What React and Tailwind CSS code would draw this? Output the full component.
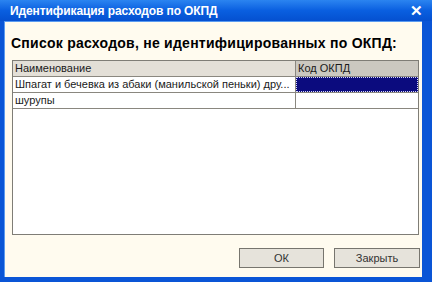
export default function App() {
  const font = { fontFamily: '"Liberation Sans", Arial, sans-serif' };
  return (
    <div
      className="w-[432px] h-[282px] flex flex-col bg-[#0a55d6] overflow-hidden"
      style={font}
    >
      {/* title bar */}
      <div className="h-[21px] flex items-center justify-between pl-[10px] pr-[9px] bg-gradient-to-b from-[#2b84f0] via-[#0a5fe0] to-[#0550d0]">
        <span className="text-white font-bold text-[12px] leading-none tracking-[-0.1px]">
          Идентификация расходов по ОКПД
        </span>
        <span className="text-white font-bold text-[15px] leading-none">✕</span>
      </div>

      {/* frame */}
      <div className="flex-1 flex pl-[4px] pr-[10px] pb-[5px]">
        <div className="flex-1 flex flex-col bg-[#fffbef] border-l border-t border-[#5b9bf0]">
          <div className="pl-[6px] pt-[13px] h-[38px] text-black font-bold text-[14px] leading-[16px] tracking-[0.25px]">
            Список расходов, не идентифицированных по ОКПД:
          </div>

          {/* table */}
          <div className="ml-[7px] w-[407px] h-[175px] border border-[#7f7d76] bg-white text-[11px] text-[#1a1a1a]">
            <div className="grid grid-cols-[283px_1fr] h-[16px] border-b border-[#8a877f]">
              <div className="bg-[#e3dfd7] border-r border-[#8a877f] pl-[2px] leading-[15px]">
                Наименование
              </div>
              <div className="bg-[#cbc8c0] pl-[2px] leading-[15px]">Код ОКПД</div>
            </div>
            <div className="grid grid-cols-[283px_1fr] h-[16px] border-b border-[#8a877f]">
              <div className="border-r border-[#8a877f] pl-[2px] leading-[15px] whitespace-nowrap overflow-hidden">
                Шпагат и бечевка из абаки (манильской пеньки) дру...
              </div>
              <div className="bg-[#0b0b7e] border border-dotted border-[#d8d8ff]" />
            </div>
            <div className="grid grid-cols-[283px_1fr] h-[16px] border-b border-[#8a877f]">
              <div className="border-r border-[#8a877f] pl-[2px] leading-[15px]">шурупы</div>
              <div />
            </div>
          </div>

          {/* buttons */}
          <div className="flex justify-end gap-[10px] mt-[13px] pr-[2px]">
            <button className="w-[85px] h-[20px] bg-[#e6e3db] border border-[#77756e] text-[11px] text-[#333] leading-none">
              ОК
            </button>
            <button className="w-[86px] h-[20px] bg-[#e6e3db] border border-[#77756e] text-[11px] text-[#333] leading-none">
              Закрыть
            </button>
          </div>
        </div>
      </div>
    </div>
  );
}
